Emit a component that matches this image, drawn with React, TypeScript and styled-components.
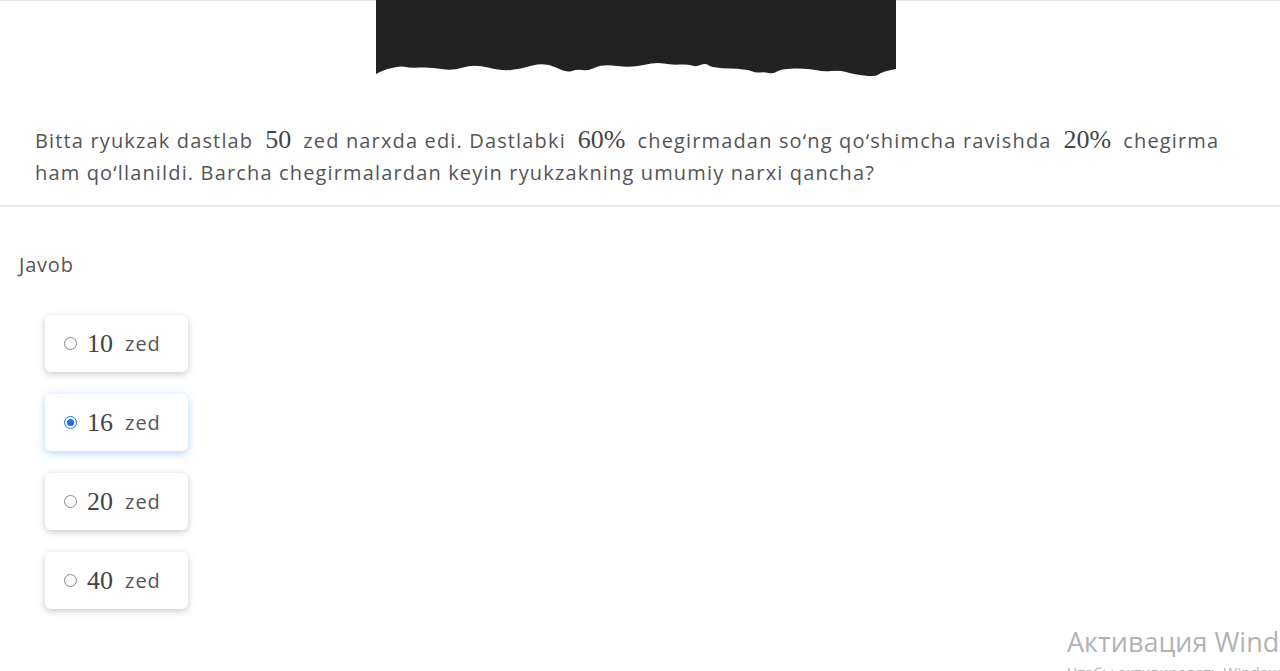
import React from "react";
import styled, { createGlobalStyle } from "styled-components";

const Global = createGlobalStyle`
  html, body { margin: 0; padding: 0; background: #fff; overflow: hidden; }
  body { width: 1280px; height: 671px; position: relative; font-family: "Open Sans", "Noto Sans", sans-serif; }
`;

const Page = styled.div`
  border-top: 1px solid #e6e6e6;
  display: flex;
  flex-direction: column;
`;

const Header = styled.div`
  display: flex;
  justify-content: center;
  padding-right: 8px;
`;

const TornImage = styled.svg`
  display: block;
  width: 520px;
  height: 78px;
  margin-top: -1px;
`;

const Question = styled.p`
  margin: 46px 0 0;
  padding: 0 35px;
  font-size: 20px;
  line-height: 32px;
  color: #555;
  letter-spacing: 1.15px;
`;

const Math = styled.span`
  font-family: "Liberation Serif", "DejaVu Serif", serif;
  font-size: 26px;
  color: #444;
  letter-spacing: 0;
  margin: 0 12px;
`;

const Divider = styled.hr`
  margin: 16px 0 0;
  border: 0;
  height: 2px;
  background: #e8e8e8;
`;

const Label = styled.div`
  margin: 45px 0 0 19px;
  font-size: 20px;
  letter-spacing: 0.8px;
  color: #555;
  line-height: 26px;
`;

const Options = styled.div`
  display: flex;
  flex-direction: column;
  gap: 22px;
  margin: 37px 0 0 45px;
`;

const Card = styled.label<{ $active?: boolean }>`
  display: flex;
  align-items: center;
  width: 143px;
  height: 57px;
  box-sizing: border-box;
  padding-left: 19px;
  border-radius: 6px;
  background: #fff;
  box-shadow: ${(p) =>
    p.$active
      ? "0 2px 8px rgba(40, 130, 255, 0.35)"
      : "0 2px 7px rgba(0, 0, 0, 0.22)"};
`;

const Radio = styled.span<{ $checked?: boolean }>`
  width: 13px;
  height: 13px;
  box-sizing: border-box;
  border-radius: 50%;
  border: 1px solid ${(p) => (p.$checked ? "#1a73e8" : "#888")};
  background: #fff;
  position: relative;
  margin-right: 10px;
  &::after {
    content: "";
    display: ${(p) => (p.$checked ? "block" : "none")};
    position: absolute;
    inset: 2px;
    border-radius: 50%;
    background: #1a73e8;
  }
`;

const Num = styled.span`
  font-family: "Liberation Serif", "DejaVu Serif", serif;
  font-size: 26px;
  color: #444;
  margin-right: 12px;
`;

const Unit = styled.span`
  font-size: 20px;
  letter-spacing: 1px;
  color: #555;
`;

const Watermark = styled.div`
  position: absolute;
  left: 1067px;
  top: 628px;
  white-space: nowrap;
  color: #b3b3b3;
  font-family: "Open Sans", "Noto Sans", sans-serif;
  line-height: 1;
`;

const WmTitle = styled.div`
  font-size: 27px;
`;

const WmSub = styled.div`
  font-size: 15px;
  margin-top: 10px;
`;

const pts: [number, number][] = [
  [0, 74], [10, 69], [26, 66], [33, 68], [55, 67], [76, 71], [98, 64], [126, 71],
  [144, 69], [169, 62], [191, 73], [201, 69], [212, 71], [227, 64], [255, 68],
  [280, 62], [295, 65], [312, 64], [320, 67], [329, 63], [337, 68], [370, 69],
  [380, 73], [388, 72], [398, 74], [404, 69], [431, 68], [448, 72], [463, 70],
  [477, 74], [499, 77], [506, 72], [520, 69],
];

function buildPath() {
  let d = `M0 0 L520 0 L520 ${pts[pts.length - 1][1]}`;
  for (let i = pts.length - 2; i >= 0; i--) {
    const [x, y] = pts[i];
    const [nx, ny] = pts[i + 1];
    const cx = (x + nx) / 2;
    d += ` Q${nx} ${ny} ${cx} ${(y + ny) / 2}`;
  }
  d += ` L0 ${pts[0][1]} Z`;
  return d;
}

const options = [
  { v: "10", checked: false },
  { v: "16", checked: true },
  { v: "20", checked: false },
  { v: "40", checked: false },
];

export default function App() {
  return (
    <>
      <Global />
      <Page>
        <Header>
          <TornImage viewBox="0 0 520 78">
            <path d={buildPath()} fill="#222" />
          </TornImage>
        </Header>
        <Question>
          Bitta ryukzak dastlab<Math>50</Math>zed narxda edi. Dastlabki
          <Math>60%</Math>chegirmadan so‘ng qo‘shimcha ravishda<Math>20%</Math>
          chegirma ham qo‘llanildi. Barcha chegirmalardan keyin ryukzakning umumiy
          narxi qancha?
        </Question>
        <Divider />
        <Label>Javob</Label>
        <Options>
          {options.map((o) => (
            <Card key={o.v} $active={o.checked}>
              <Radio $checked={o.checked} />
              <Num>{o.v}</Num>
              <Unit>zed</Unit>
            </Card>
          ))}
        </Options>
      </Page>
      <Watermark>
        <WmTitle>Активация Windows</WmTitle>
        <WmSub>Чтобы активировать Windows, перейдите в раздел "Параметры".</WmSub>
      </Watermark>
    </>
  );
}
